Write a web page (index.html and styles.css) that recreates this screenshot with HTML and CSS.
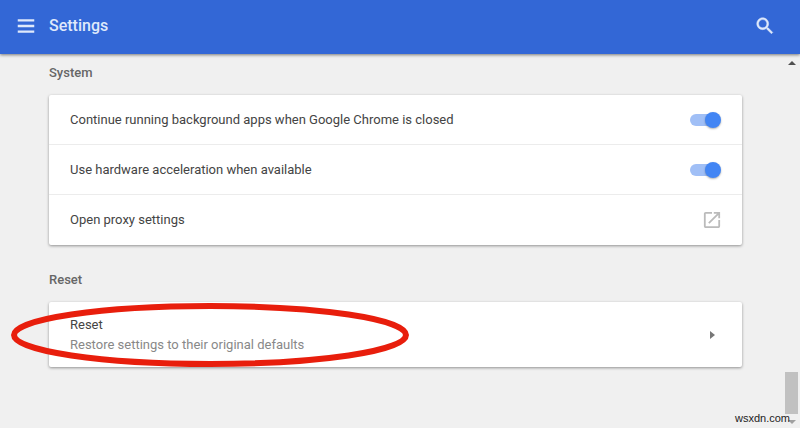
FILE: index.html
```html
<!DOCTYPE html>
<html lang="en">
<head>
  <meta charset="UTF-8" />
  <meta name="viewport" content="width=device-width, initial-scale=1.0"/>
  <title>Settings</title>
  <link rel="stylesheet" href="styles.css">
</head>
<body>

  <header class="toolbar">
    <button class="icon-btn" type="button" aria-label="Main menu">
      <svg viewBox="0 0 24 24"><path d="M3 19.4h18v-2.6H3v2.6zm0-6.1h18v-2.6H3v2.6zm0-8.7v2.6h18V4.6H3z"/></svg>
    </button>
    <h1>Settings</h1>
    <button class="icon-btn" type="button" aria-label="Search settings">
      <svg viewBox="0 0 24 24"><path stroke="currentColor" stroke-width=".5" d="M15.5 14h-.79l-.28-.27C15.41 12.59 16 11.11 16 9.5 16 5.91 13.09 3 9.5 3S3 5.91 3 9.5 5.91 16 9.5 16c1.61 0 3.09-.59 4.23-1.57l.27.28v.79l5 4.99L20.49 19l-4.99-5zm-6 0C7.01 14 5 11.99 5 9.5S7.01 5 9.5 5 14 7.01 14 9.5 11.99 14 9.5 14z"/></svg>
    </button>
  </header>

  <div class="page">
    <main class="content">
      <section>
        <h2>System</h2>
        <div class="card">
          <div class="row">
            <label for="background">Continue running background apps when Google Chrome is closed</label>
            <input class="toggle" type="checkbox" id="background" checked />
          </div>
          <div class="row">
            <label for="hardware">Use hardware acceleration when available</label>
            <input class="toggle" type="checkbox" id="hardware" checked />
          </div>
          <a class="row last" href="#proxy">
            <span>Open proxy settings</span>
            <svg class="external" viewBox="2 2 20 20"><path d="M19 19H5V5h7V3H5c-1.11 0-2 .9-2 2v14c0 1.1.89 2 2 2h14c1.1 0 2-.9 2-2v-7h-2v7zM14 3v2h3.59l-9.83 9.83 1.41 1.41L19 6.41V10h2V3h-7z"/></svg>
          </a>
        </div>
      </section>

      <section>
        <h2>Reset</h2>
        <div class="card">
          <a class="row last tall" href="#reset">
            <span class="text">
              <span>Reset</span>
              <span class="secondary">Restore settings to their original defaults</span>
            </span>
            <svg class="arrow" viewBox="0 0 5 8"><path d="M0 0l5 4-5 4z"/></svg>
          </a>
          <svg class="highlight" viewBox="0 0 398 64"><ellipse cx="199" cy="32" rx="196" ry="29"/></svg>
        </div>
      </section>
    </main>

    <div class="scrollbar">
      <svg class="scroll-arrow" viewBox="0 0 8 4"><path d="M0 4l4-4 4 4z"/></svg>
      <div class="thumb"></div>
      <svg class="scroll-arrow down" viewBox="0 0 8 4"><path d="M0 0l4 4 4-4z"/></svg>
    </div>
    <span class="watermark">wsxdn.com</span>
  </div>

</body>
</html>
```
FILE: styles.css
```css
* {
  box-sizing: border-box;
}

body {
  margin: 0;
  min-height: 100vh;
  display: flex;
  flex-direction: column;
  background-color: #f0f0f0;
  color: #444;
  font-family: Roboto, sans-serif;
  font-size: 13px;
  line-height: 20px;
}

.toolbar {
  display: flex;
  align-items: center;
  gap: 12px;
  height: 54px;
  padding: 0 24px 2px 15px;
  background-color: #3367d6;
  color: #dfe9fb;
  box-shadow: 0 1px 3px rgba(0, 0, 0, 0.5);
  z-index: 1;
}

h1 {
  flex: 1;
  margin: 0;
  font-size: 16px;
  font-weight: 500;
}

.icon-btn {
  display: flex;
  padding: 0;
  border: 0;
  background: none;
  color: inherit;
  cursor: pointer;
}

.icon-btn svg {
  width: 22px;
  height: 22px;
  fill: currentColor;
}

.page {
  position: relative;
  flex: 1;
  display: flex;
}

.content {
  flex: 1;
  padding: 9px 43px 0 49px;
}

section {
  margin-bottom: 25px;
}

h2 {
  margin: 0 0 12px;
  color: #666;
  font-size: 13px;
  font-weight: 500;
}

.card {
  position: relative;
  background-color: #fff;
  border-radius: 2px;
  box-shadow: 0 1px 3px rgba(0, 0, 0, 0.4);
}

.row {
  display: flex;
  align-items: center;
  justify-content: space-between;
  height: 50px;
  padding: 0 21px;
  border-bottom: 1px solid #ececec;
  color: inherit;
  text-decoration: none;
}

.row.last {
  border-bottom: 0;
}

.row.tall {
  height: 65px;
}

.text {
  display: flex;
  flex-direction: column;
}

.secondary {
  color: #888;
}

.toggle {
  appearance: none;
  position: relative;
  width: 31px;
  height: 16px;
  margin: 0;
  cursor: pointer;
}

.toggle::before {
  content: "";
  position: absolute;
  inset: 2px 4px 2px 0;
  border-radius: 6px;
  background-color: #a0bff6;
}

.toggle::after {
  content: "";
  position: absolute;
  top: 0;
  left: 0;
  width: 16px;
  height: 16px;
  border-radius: 50%;
  background-color: #fff;
  box-shadow: 0 1px 2px rgba(0, 0, 0, 0.3);
}

.toggle:checked::after {
  left: 15px;
  background-color: #4285f4;
}

.external {
  width: 18px;
  height: 18px;
  fill: #bbb;
}

.arrow {
  width: 5px;
  height: 8px;
  margin-right: 6px;
  fill: #777;
}

/* red ring around the reset row */
.highlight {
  position: absolute;
  top: 1px;
  left: -38px;
  width: 398px;
  height: 64px;
  fill: none;
  stroke: #e81e0c;
  stroke-width: 6px;
  pointer-events: none;
}

.scrollbar {
  display: flex;
  flex-direction: column;
  align-items: center;
  width: 15px;
  padding: 7px 2px 4px 0;
}

.scroll-arrow {
  width: 8px;
  height: 4px;
  fill: #505050;
}

.scroll-arrow.down {
  fill: #a0a0a0;
}

.thumb {
  width: 13px;
  height: 42px;
  margin: auto 0 6px;
  background-color: #c1c1c1;
}

.watermark {
  position: absolute;
  right: 10px;
  bottom: 0;
  color: #222;
  font-family: "Liberation Sans", Arial, sans-serif;
  font-size: 11px;
}
```
